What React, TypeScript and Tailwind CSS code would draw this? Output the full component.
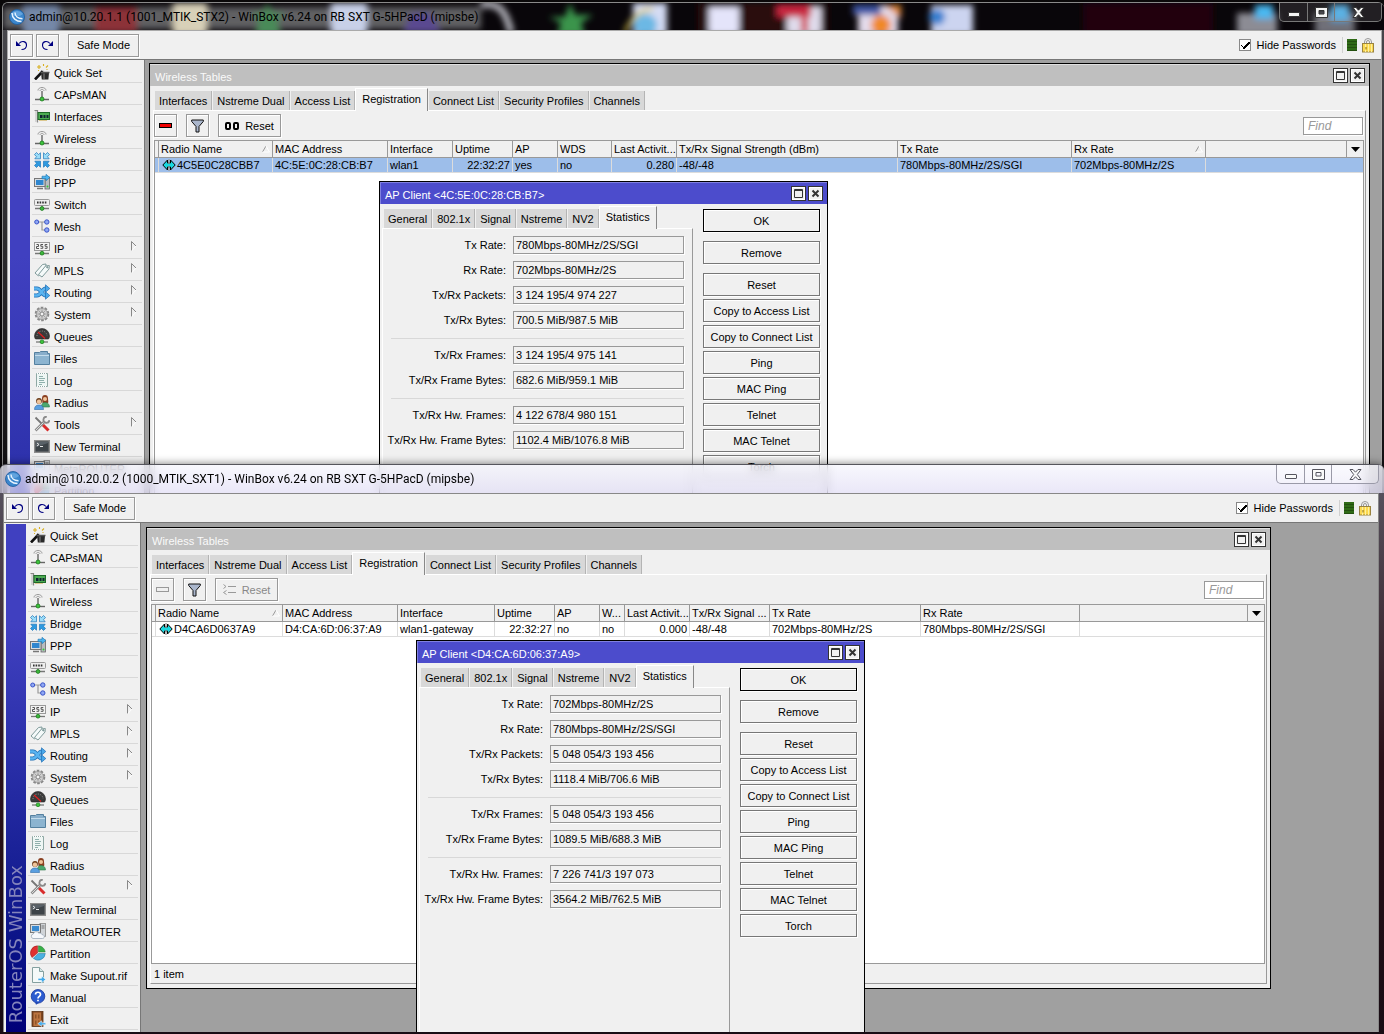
import { useId } from "react";
import type { ReactNode } from "react";

const ICONS: Record<string, ReactNode> = {
  wand: (
    <>
      <path d="M1 15.500L9 7" stroke="#111" strokeWidth="2.600" />
      <path d="M8.500 6L10 7.500" stroke="#ddd" strokeWidth="1.500" />
      <path d="M7 8.500h8l-.6 7H7.800z" fill="#2a2a2a" />
      <path d="M6.500 8.500h9" stroke="#555" strokeWidth="1.500" />
      <path d="M10 9.500v5.500" stroke="#888" />
      <path d="M5 1v4M3 3h4M9.500 0v2M12 3.500l2-2M4 6.500h1M12.500 5.500h1" stroke="#d8b020" strokeWidth="1.100" />
    </>
  ),
  antenna: (
    <>
      <path d="M4 4.500C4 2.500 6 1.500 8 1.500s4 1 4 3M6 5c0-1 1-1.500 2-1.500S10 4 10 5" stroke="#999" fill="none" />
      <path d="M8 5v8" stroke="#777" strokeWidth="1.600" />
      <path d="M1 13.500h14" stroke="#666" strokeWidth="1.400" />
      <circle cx="8" cy="13" r="2" fill="#3cc43c" stroke="#1d7a1d" strokeWidth=".8" />
    </>
  ),
  card: (
    <>
      <path d="M.5 2.500h3v12" stroke="#888" strokeWidth="1.200" fill="none" />
      <path d="M2 3v11" stroke="#ccc" strokeWidth="1.500" />
      <rect x="4" y="4.500" width="11.500" height="7" fill="#4cab52" stroke="#1f6a2a" />
      <rect x="6" y="7" width="2.500" height="3" fill="#123" />
      <rect x="9.500" y="7" width="2" height="3" fill="#123" />
      <rect x="12.500" y="7" width="2" height="3" fill="#123" />
      <path d="M5.500 12.500h8" stroke="#c8a030" strokeDasharray="1 1" />
    </>
  ),
  bridge: (
    <g stroke="#1c74b8" strokeWidth=".7">
      <path d="M.5 2.500l2-2L4.500 2.500 6.500.8v6H.8L2.500 4.700z" fill="#9adcf8" />
      <path d="M15.500 2.500l-2-2-2 2L9.500.8v6h5.700l-1.700-2.100z" fill="#9adcf8" />
      <path d="M.5 13.500l2 2 2-2 2 1.700v-6H.8l1.700 2.100z" fill="#2f9ae0" />
      <path d="M15.500 13.500l-2 2-2-2-2 1.700v-6h5.700l-1.700 2.100z" fill="#2f9ae0" />
    </g>
  ),
  ppp: (
    <>
      <rect x="11" y="3" width="4.500" height="12" fill="#b8bcc0" stroke="#666" strokeWidth=".8" />
      <rect x=".5" y="4.500" width="10.500" height="8" fill="#d8dce0" stroke="#777" />
      <rect x="2" y="6" width="7.500" height="5" fill="#2f86cf" />
      <path d="M3 14.500h6" stroke="#777" strokeWidth="1.500" />
      <path d="M8 2.200h4V.3l3.800 3.200L12 6.700V4.800H8z" fill="#4ab4f0" stroke="#1a70b0" strokeWidth=".6" />
      <circle cx="13.500" cy="12.500" r="1" fill="#3c3" />
    </>
  ),
  switch: (
    <>
      <rect x=".5" y="3.500" width="15" height="6" rx="1" fill="#eee" stroke="#999" />
      <path d="M3 6.500h10" stroke="#333" strokeWidth="2" strokeDasharray="1.600 1" />
      <path d="M8 9.500v3M1 12.500h14" stroke="#777" strokeWidth="1.300" />
      <circle cx="8" cy="12.500" r="1.900" fill="#3cb83c" stroke="#1d7a1d" strokeWidth=".8" />
    </>
  ),
  mesh: (
    <>
      <path d="M4 4h8M8 4v8h4" stroke="#999" fill="none" strokeWidth="1.200" />
      <g fill="#8fa8f4" stroke="#3c55c8">
        <circle cx="2.700" cy="4" r="2" />
        <circle cx="12.800" cy="4" r="2.200" />
        <circle cx="12.800" cy="12" r="2.200" />
      </g>
    </>
  ),
  ip: (
    <>
      <rect x=".5" y="2.500" width="15" height="8" fill="#f4f4f4" stroke="#999" />
      <path d="M2.500 4.500h2v2h-2v2h2.500M9 4.500H6.800v1.800h2v2H6.500M13.300 4.500h-2.200v1.800h2v2h-2.300" stroke="#555" fill="none" />
      <path d="M1 13.500h14" stroke="#777" strokeWidth="1.300" />
      <circle cx="8" cy="13.200" r="1.900" fill="#3cb83c" stroke="#1d7a1d" strokeWidth=".8" />
    </>
  ),
  mpls: (
    <g fill="#f5fafa" stroke="#7f9a9a">
      <path d="M1 11L8.500 2.500 12 2l-.3 3.500L4.500 14z" />
      <path d="M4.500 12.500L11.500 4l3.800-.5L15 7 8 15z" />
      <circle cx="13.300" cy="5.300" r=".7" fill="#7f9a9a" />
    </g>
  ),
  routing: (
    <g fill="none">
      <path d="M0 4.500h3c4 0 5 7 9 7h1M0 11.500h3c4 0 5-7 9-7h1" stroke="#1f6fb4" strokeWidth="4" />
      <path d="M0 4.500h3c4 0 5 7 9 7h1M0 11.500h3c4 0 5-7 9-7h1" stroke="#5ab4f0" strokeWidth="2.600" />
      <path d="M11.500.8l4.300 3.700-4.300 3.700zM11.500 7.800l4.300 3.700-4.300 3.700z" fill="#4aa8ea" stroke="#1f6fb4" strokeWidth=".7" />
    </g>
  ),
  gear: (
    <>
      <circle cx="8" cy="8" r="6.300" fill="none" stroke="#888" strokeWidth="2" strokeDasharray="2.600 1.350" />
      <circle cx="8" cy="8" r="5.500" fill="#cfcfcf" stroke="#909090" strokeWidth=".8" />
      <path d="M8 3.500v9M3.500 8h9M5 5l6 6M11 5l-6 6" stroke="#999" strokeWidth=".8" />
      <circle cx="8" cy="8" r="2" fill="#f3f3f3" stroke="#888" />
    </>
  ),
  gauge: (
    <>
      <path d="M.5 8A7.500 7.500 0 0115.500 8c0 1-.5 2.500-1 3h-13C1 10.500.5 9 .5 8z" fill="#3a3a3a" stroke="#222" strokeWidth=".6" />
      <path d="M3 8a5 5 0 0110 0" stroke="#999" fill="none" strokeDasharray="1 1.500" />
      <path d="M4 4l7 6.500" stroke="#e02020" strokeWidth="1.200" />
      <path d="M2 14h12" stroke="#777" strokeWidth="1.300" />
      <circle cx="8" cy="13.800" r="1.900" fill="#3cc43c" stroke="#1d7a1d" strokeWidth=".7" />
    </>
  ),
  folder: (
    <>
      <path d="M.5 14.500v-12h5l1-1h7v2h2v11z" fill="#88aecb" stroke="#54809f" />
      <path d="M1 5h14v9H1z" fill="#8cb4d0" />
      <path d="M1 5.500h14" stroke="#c3dcec" />
    </>
  ),
  log: (
    <>
      <path d="M2.500 1.500h11v13h-11z" fill="#eef6f4" stroke="#8fa8a4" />
      <path d="M3 1.500h10M3 14.500h10" stroke="#fff" strokeDasharray="1 1" />
      <path d="M5 4.500h4M5 6.500h6M5 8.500h5M5 10.500h6M5 12.500h3" stroke="#8fb0ac" />
    </>
  ),
  people: (
    <>
      <path d="M8 4.500a3 3.400 0 016 0c0 2 .8 4 0 4.500H8.500z" fill="#8a3f20" />
      <circle cx="11" cy="5" r="2" fill="#f0c49a" />
      <path d="M7.500 13c0-3 1-4.500 3.500-4.500s4.500 1.500 4.500 4.500z" fill="#4ca870" stroke="#2b7a4a" strokeWidth=".6" />
      <circle cx="5" cy="7" r="2.900" fill="#6a3a18" />
      <circle cx="5" cy="7.800" r="2.200" fill="#f0c49a" />
      <path d="M.5 15.500c0-3 1.500-4.500 4.500-4.500s4.500 1.500 4.500 4.500z" fill="#5a9fe0" stroke="#2c69a8" strokeWidth=".6" />
    </>
  ),
  tools: (
    <g fill="none">
      <path d="M1.500 1.500L9 9" stroke="#777" strokeWidth="1.800" />
      <path d="M9 9l5.500 5.500" stroke="#d82c2c" strokeWidth="3" />
      <path d="M1.500 14.500L10 6" stroke="#8a8a8a" strokeWidth="2.600" />
      <path d="M1.800 14.200L10 6" stroke="#ddd" strokeWidth="1" />
      <path d="M12.800.8a3 3 0 10 2.600 3.400" stroke="#8a8a8a" strokeWidth="1.800" />
    </g>
  ),
  terminal: (
    <>
      <rect x=".7" y="2.700" width="14.600" height="11.600" fill="#3d4348" stroke="#8c8c8c" strokeWidth="1.400" />
      <path d="M2 9l12-4v-1H2z" fill="#596168" />
      <path d="M3 5l2 1.500L3 8M6 8.500h3" stroke="#e8e8e8" fill="none" />
    </>
  ),
  meta: (
    <>
      <rect x="10" y=".5" width="5.500" height="13" fill="#d0d4d8" stroke="#888" strokeWidth=".8" />
      <path d="M11.500 3h3M11.500 5h3" stroke="#777" />
      <rect x=".5" y="1.500" width="10" height="8" fill="#d8dce0" stroke="#777" />
      <rect x="2" y="3" width="7" height="5" fill="#3a8ad0" />
      <path d="M3 15.500a2.300 2.300 0 01.3-4.500 3 3 0 015.400-1 2.800 2.800 0 013.300 1.600c3 0 3 3.900.5 3.900z" fill="#f6f8fc" stroke="#9aa8b8" strokeWidth=".8" />
    </>
  ),
  pie: (
    <>
      <path d="M7.500 8V.8A7.200 7.200 0 002 12.500z" fill="#e03030" stroke="#8e1a1a" strokeWidth=".5" />
      <path d="M8.500 7V.8a7 7 0 016.700 6.200z" fill="#38b048" stroke="#1d7028" strokeWidth=".5" />
      <path d="M8.300 8.500h7A7.200 7.200 0 013.300 13.300z" fill="#4ab0e0" stroke="#20709c" strokeWidth=".5" />
    </>
  ),
  supout: (
    <>
      <path d="M2.500.5h7l4 4v11h-11z" fill="#f4f9f9" stroke="#84a0a0" />
      <path d="M9.500.5v4h4" fill="#d3e4e4" stroke="#84a0a0" />
      <path d="M8 11.300h3.500V9l4.300 3.500-4.300 3.300v-2.300H8z" fill="#3fa8ea" stroke="#fff" strokeWidth=".6" />
    </>
  ),
  manual: (
    <>
      <circle cx="8" cy="7.300" r="6.800" fill="#2c5cd0" stroke="#17359a" strokeWidth=".8" />
      <path d="M5 13l1 2.700L9.500 13.500z" fill="#2148b4" />
      <path d="M5.500 5.500c0-3 5-3 5 0 0 2-2.500 1.800-2.500 4M8 10.800v1.500" stroke="#fff" strokeWidth="1.700" fill="none" />
    </>
  ),
  exit: (
    <>
      <rect x="2" y=".5" width="11" height="15" fill="#7c4520" stroke="#5b3012" strokeWidth=".8" />
      <rect x="3.500" y="1.500" width="7.500" height="13.500" fill="#bb7440" />
      <path d="M5 3.500h1.500v4H5zM8 3.500h1.500v4H8zM5 9.500h1.500v4H5zM8 9.500h1.500v2H8z" fill="#8f5428" />
      <path d="M15.800 11.700h-4V9.800L7.800 12.700l4 2.900v-1.800h4z" fill="#4ab0f0" stroke="#fff" strokeWidth=".5" />
    </>
  ),
};

function Icon({ name }: { name: string }) {
  return (
    <svg width="16" height="16" viewBox="0 0 16 16" className="shrink-0" aria-hidden="true">
      {ICONS[name]}
    </svg>
  );
}

const MENU: { icon: string; label: string; sub?: boolean }[] = [
  { icon: "wand", label: "Quick Set" },
  { icon: "antenna", label: "CAPsMAN" },
  { icon: "card", label: "Interfaces" },
  { icon: "antenna", label: "Wireless" },
  { icon: "bridge", label: "Bridge" },
  { icon: "ppp", label: "PPP" },
  { icon: "switch", label: "Switch" },
  { icon: "mesh", label: "Mesh" },
  { icon: "ip", label: "IP", sub: true },
  { icon: "mpls", label: "MPLS", sub: true },
  { icon: "routing", label: "Routing", sub: true },
  { icon: "gear", label: "System", sub: true },
  { icon: "gauge", label: "Queues" },
  { icon: "folder", label: "Files" },
  { icon: "log", label: "Log" },
  { icon: "people", label: "Radius" },
  { icon: "tools", label: "Tools", sub: true },
  { icon: "terminal", label: "New Terminal" },
  { icon: "meta", label: "MetaROUTER" },
  { icon: "pie", label: "Partition" },
  { icon: "supout", label: "Make Supout.rif" },
  { icon: "manual", label: "Manual" },
  { icon: "exit", label: "Exit" },
];

function Logo() {
  return (
    <svg width="16" height="16" viewBox="0 0 16 16" className="shrink-0" aria-hidden="true">
      <circle cx="8" cy="8" r="7.500" fill="#3b86cc" stroke="#1d5a9c" strokeWidth=".8" />
      <path d="M2 5a7 6 0 0112 0 9 9 0 01-12 0z" fill="#7db8ea" opacity=".6" />
      <path d="M3 4c0 5 4 8.500 9.500 8.500M6 3.500c0 3.500 3 6 7.500 6.300" stroke="#e8f4ff" strokeWidth="1.400" fill="none" />
    </svg>
  );
}

function Sidebar() {
  return (
    <aside className="flex w-[137px] shrink-0 overflow-hidden border-r border-[#777] bg-[#f0f0f0] pl-[2px] pt-[1px]">
      <div className="flex w-[20px] shrink-0 items-end justify-center bg-linear-to-b from-[#4040c0] from-20% to-[#000078] pb-[9px]">
        <span className="rotate-180 whitespace-nowrap font-['DejaVu_Sans'] text-[18px] leading-[20px] text-[#8484bc] [writing-mode:vertical-rl]">
          RouterOS WinBox
        </span>
      </div>
      <nav className="ml-[2px] w-[110px]">
        {MENU.map((m) => (
          <button key={m.label} type="button" className="flex h-[22px] w-full items-center gap-1 border-b border-[#d8d8d8] pl-[2px] text-left">
            <Icon name={m.icon} />
            <span className="flex-1 whitespace-nowrap pt-[2px]">{m.label}</span>
            {m.sub && (
              <svg width="10" height="12" viewBox="0 0 10 12" className="mr-[2px] mb-1 shrink-0" aria-hidden="true">
                <path d="M1.500 11V1.500L6 6" stroke="#888" fill="none" />
                <path d="M6 6l-4.500 5" stroke="#fff" fill="none" />
              </svg>
            )}
          </button>
        ))}
      </nav>
    </aside>
  );
}

function ToolButton({ children, className = "", label, disabled }: { children: ReactNode; className?: string; label?: string; disabled?: boolean }) {
  return (
    <button
      type="button"
      aria-label={label}
      disabled={disabled}
      className={`flex h-[23px] items-center justify-center border border-[#999] bg-[#f0f0f0] shadow-[inset_1px_1px_0_#fff,1px_1px_0_#fff] ${className}`}
    >
      {children}
    </button>
  );
}

function Toolbar() {
  return (
    <div className="flex h-[29px] shrink-0 items-center border-b border-[#777] bg-[#f0f0f0] pr-[7px] pl-[2px]">
      <ToolButton className="w-[23px]" label="Undo">
        <svg width="13" height="12" viewBox="0 0 13 12" aria-hidden="true">
          <path d="M1 2v5h5z" fill="#000080" />
          <path d="M4 4.500C7 1 11.500 2.500 11.500 6S9 10.500 6.500 10.500" stroke="#000080" strokeWidth="1.100" fill="none" />
        </svg>
      </ToolButton>
      <ToolButton className="ml-[3px] w-[23px]" label="Redo">
        <svg width="13" height="12" viewBox="0 0 13 12" aria-hidden="true">
          <path d="M12 2v5H7z" fill="#000080" />
          <path d="M9 4.500C6 1 1.500 2.500 1.500 6S4 10.500 6.500 10.500" stroke="#000080" strokeWidth="1.100" fill="none" />
        </svg>
      </ToolButton>
      <ToolButton className="ml-[9px] w-[71px]">Safe Mode</ToolButton>
      <label className="ml-auto flex items-center gap-[6px]">
        <input
          type="checkbox"
          defaultChecked
          className="size-[12px] appearance-none border border-[#888] bg-white bg-[image:linear-gradient(45deg,transparent_34%,#000_34%,#000_48%,transparent_48%),linear-gradient(-45deg,transparent_42%,#000_42%,#000_58%,transparent_58%)] bg-[length:4px_4px,7px_7px] bg-[position:1px_4px,3px_2px] bg-no-repeat"
        />
        Hide Passwords
      </label>
      <div className="ml-[6px] h-[16px] w-[1px] bg-[#d0d0d0]" />
      <div className="ml-[4px] h-[12px] w-[10px] bg-[repeating-linear-gradient(#2f6a16_0_2px,#23500f_2px_3px)]" />
      <svg width="12" height="15" viewBox="0 0 12 15" className="ml-[5px]" aria-hidden="true">
        <path d="M2.500 6V4a3.500 3.500 0 017 0v2M4.500 6V4a1.500 1.500 0 013 0v2" stroke="#999" fill="none" />
        <rect x=".5" y="5.500" width="11" height="8.500" fill="#fbd850" stroke="#9a8340" />
        <path d="M3.500 6v8M6.500 6v8M9.500 6v8" stroke="#fdf0a0" />
        <path d="M4 9v2.500" stroke="#8a6a10" />
      </svg>
    </div>
  );
}

function FrameButtons() {
  return (
    <div className="ml-auto flex gap-[2px] pr-[4px]">
      <button type="button" aria-label="Maximize" className="flex size-[15px] items-center justify-center border border-[#333] bg-[#f0f0f0] shadow-[inset_0_0_0_1px_#fff]">
        <svg width="9" height="9" viewBox="0 0 9 9" aria-hidden="true">
          <path d="M.5.500h8v8h-8zM.5 1.500h8" stroke="#333" fill="none" />
        </svg>
      </button>
      <button type="button" aria-label="Close" className="flex size-[15px] items-center justify-center border border-[#333] bg-[#f0f0f0] shadow-[inset_0_0_0_1px_#fff]">
        <svg width="9" height="9" viewBox="0 0 9 9" aria-hidden="true">
          <path d="M1.500 1.500l6 6M7.500 1.500l-6 6" stroke="#333" strokeWidth="2" />
        </svg>
      </button>
    </div>
  );
}

function Tabs({ items, active }: { items: string[]; active: string }) {
  return (
    <div role="tablist" className="flex h-[22px] shrink-0 items-end gap-[1px] pl-[2px]">
      {items.map((t) =>
        t === active ? (
          <button
            key={t}
            role="tab"
            aria-selected="true"
            type="button"
            className="relative -mb-[1px] -ml-[1px] h-[23px] whitespace-nowrap border-t border-r border-l border-t-white border-r-[#888] border-l-white bg-[#f0f0f0] px-[6px] pb-[2px]"
          >
            {t}
          </button>
        ) : (
          <button
            key={t}
            role="tab"
            aria-selected="false"
            type="button"
            className="h-[19px] whitespace-nowrap border-r border-[#b4b4b4] bg-[#d8d8d8] px-[4px]"
          >
            {t}
          </button>
        ),
      )}
    </div>
  );
}

type Column = { label: string; width: string; value: string; right?: boolean; sort?: boolean };

function Sort() {
  return (
    <svg width="8" height="8" viewBox="0 0 8 8" className="mr-[2px] shrink-0" aria-hidden="true">
      <path d="M.5 7L4 1" stroke="#999" />
      <path d="M4 1l3.500 6H.5" stroke="#fff" fill="none" />
    </svg>
  );
}

function DataTable({ columns, selected }: { columns: Column[]; selected: boolean }) {
  return (
    <table className="w-full table-fixed border-separate border-spacing-0 text-left">
      <colgroup>
        <col className="w-[4px]" />
        {columns.map((c) => (
          <col key={c.label} className={c.width} />
        ))}
        <col />
        <col className="w-[16px]" />
      </colgroup>
      <thead>
        <tr className="h-[17px] bg-[#f0f0f0]">
          <th className="border-r border-b border-[#999] p-0" />
          {columns.map((c) => (
            <th key={c.label} className="h-[17px] overflow-hidden border-r border-b border-[#999] p-0 font-normal">
              <div className="flex items-center justify-between whitespace-nowrap pl-[2px] leading-[16px]">
                {c.label}
                {c.sort && <Sort />}
              </div>
            </th>
          ))}
          <th className="border-r border-b border-[#999] p-0" />
          <th className="border-b border-[#999] p-0">
            <svg width="9" height="5" viewBox="0 0 9 5" className="mx-auto" aria-hidden="true">
              <path d="M0 0h9L4.500 5z" fill="#000" />
            </svg>
          </th>
        </tr>
      </thead>
      <tbody>
        <tr className={selected ? "bg-[#9dbeea]" : "bg-white"}>
          <td className="border-r border-b border-[#dcdcdc] p-0" />
          {columns.map((c, i) => (
            <td key={c.label} className={`h-[15px] overflow-hidden border-r border-b border-[#dcdcdc] p-0 ${c.right ? "text-right" : ""}`}>
              <div className={`flex items-center whitespace-nowrap px-[2px] leading-[14px] ${c.right ? "justify-end" : ""}`}>
                {i === 0 && (
                  <svg width="14" height="12" viewBox="0 0 14 12" className="ml-[1px] mr-[1px] shrink-0" aria-hidden="true">
                    <path d="M5.500 1L.8 6l4.700 5V8h3v3l4.700-5-4.700-5v3h-3z" fill="#18d8e0" stroke="#000" />
                    <path d="M7 0v12" stroke="#fff" />
                    <path d="M7 .5v11" stroke="#000" strokeDasharray="1 1" />
                    <path d="M4 6h6" stroke="#18d8e0" strokeWidth="2" />
                  </svg>
                )}
                {c.value}
              </div>
            </td>
          ))}
          <td className="border-b border-[#dcdcdc] p-0" />
          <td className="border-b border-[#dcdcdc] p-0" />
        </tr>
      </tbody>
    </table>
  );
}

const WIRELESS_TABS = ["Interfaces", "Nstreme Dual", "Access List", "Registration", "Connect List", "Security Profiles", "Channels"];

function WirelessTables({ place, columns, selected }: { place: string; columns: Column[]; selected: boolean }) {
  return (
    <section className={`absolute flex flex-col border border-black bg-[#f0f0f0] shadow-[inset_1px_1px_0_#e8e8e8] ${place}`}>
      <header className="flex h-[22px] shrink-0 items-center border-t border-[#e0e0e0] bg-[#bfbfbf] pl-[5px] text-[#fafafa]">
        <h2 className="pt-[2px]">Wireless Tables</h2>
        <FrameButtons />
      </header>
      <div className="flex min-h-0 flex-1 flex-col px-[3px] pt-[2px] pb-[4px]">
        <Tabs items={WIRELESS_TABS} active="Registration" />
        <div className="flex min-h-0 flex-1 flex-col border border-t-white border-r-[#999] border-b-[#999] border-l-white pr-[1px]">
          <div className="flex h-[29px] shrink-0 items-center">
            <ToolButton className="w-[23px]" label="Remove" disabled={!selected}>
              <svg width="13" height="5" viewBox="0 0 13 5" aria-hidden="true">
                <rect x=".5" y=".5" width="12" height="4" fill={selected ? "#f00000" : "#f0f0f0"} stroke={selected ? "#000" : "#999"} />
              </svg>
            </ToolButton>
            <ToolButton className="ml-[9px] w-[23px]" label="Filter">
              <svg width="13" height="14" viewBox="0 0 13 14" aria-hidden="true">
                <path d="M.7 1h11.600v1.500L8 7.500V13H5V7.500L.7 2.500z" fill="#aab6cc" stroke="#111" />
              </svg>
            </ToolButton>
            <ToolButton className="ml-[9px] w-[63px] gap-[6px]" disabled={!selected}>
              {selected ? (
                <>
                  <svg width="14" height="8" viewBox="0 0 14 8" aria-hidden="true">
                    <rect x="1" y="1" width="4" height="6" rx="1" stroke="#000" strokeWidth="2" fill="none" />
                    <rect x="9" y="1" width="4" height="6" rx="1" stroke="#000" strokeWidth="2" fill="none" />
                  </svg>
                  <span>Reset</span>
                </>
              ) : (
                <>
                  <svg width="13" height="11" viewBox="0 0 13 11" aria-hidden="true">
                    <path d="M5 2.500h8M5 8.500h8" stroke="#999" />
                    <path d="M.5.500L3 2.500.5 4.500M3.500 6.500l-3 2 3 2" stroke="#999" fill="none" />
                  </svg>
                  <span className="text-[#888]">Reset</span>
                </>
              )}
            </ToolButton>
            <input
              type="search"
              aria-label="Find"
              placeholder="Find"
              className="mr-[1px] ml-auto h-[18px] w-[60px] border border-[#999] bg-white px-[4px] text-[12px] italic shadow-[1px_1px_0_#fff] placeholder:text-[#999]"
            />
          </div>
          <div className="flex min-h-0 flex-1 flex-col border-t border-r border-l border-[#999] bg-white">
            <DataTable columns={columns} selected={selected} />
          </div>
          <footer className="flex h-[20px] shrink-0 items-center border-t border-[#999] pl-[3px]">1 item</footer>
        </div>
      </div>
    </section>
  );
}

const ACTIONS = ["OK", "Remove", "Reset", "Copy to Access List", "Copy to Connect List", "Ping", "MAC Ping", "Telnet", "MAC Telnet", "Torch"];

type Field = [label: string, value: string];

function ClientDialog({ place, mac, groups }: { place: string; mac: string; groups: Field[][] }) {
  const id = useId();
  return (
    <section role="dialog" aria-label={`AP Client ${mac}`} className={`absolute flex w-[449px] flex-col border border-b-0 border-black bg-[#f0f0f0] ${place}`}>
      <header className="flex h-[22px] shrink-0 items-center border-t border-l border-[#8080e0] bg-[#4c4ccc] pl-[4px] text-white">
        <h2 className="pt-[3px]">{`AP Client <${mac}>`}</h2>
        <FrameButtons />
      </header>
      <div className="flex min-h-0 flex-1 justify-between pt-[2px] pr-[7px] pl-[2px]">
        <div className="flex w-[311px] flex-col">
          <Tabs items={["General", "802.1x", "Signal", "Nstreme", "NV2", "Statistics"]} active="Statistics" />
          <div className="flex-1 border-t border-r border-l border-t-white border-r-[#999] border-l-white pt-[7px] pr-[8px] pl-[8px]">
            {groups.map((g, i) => (
              <div key={i} className={`flex flex-col gap-[7px] ${i > 0 ? "mt-[9px] border-t border-[#d8d8d8] pt-[7px]" : ""}`}>
                {g.map(([label, value]) => (
                  <div key={label} className="flex h-[18px] items-center justify-end gap-[7px]">
                    <label htmlFor={`${id}${label}`} className="shrink-0 whitespace-nowrap">
                      {label}:
                    </label>
                    <input
                      id={`${id}${label}`}
                      readOnly
                      value={value}
                      className="h-[18px] w-[171px] shrink-0 border border-[#999] bg-[#f0f0f0] px-[2px] shadow-[1px_1px_0_#fff]"
                    />
                  </div>
                ))}
              </div>
            ))}
          </div>
        </div>
        <div className="flex w-[117px] flex-col gap-[3px] pt-[3px]">
          {ACTIONS.map((a, i) => (
            <button
              key={a}
              type="button"
              className={`h-[23px] shrink-0 whitespace-nowrap border bg-[#f0f0f0] shadow-[inset_1px_1px_0_#fff,1px_1px_0_#fff] ${i === 0 ? "border-black" : "border-[#777]"} ${i < 2 ? "mb-[6px]" : ""}`}
            >
              {a}
            </button>
          ))}
        </div>
      </div>
    </section>
  );
}

function CaptionButtons({ dark }: { dark: boolean }) {
  const line = dark ? "border-[#777]" : "border-[#9a9aa8]";
  const ink = dark ? "#f4f4f4" : "#fafafa";
  const edge = dark ? "#333" : "#55555f";
  return (
    <div className={`ml-auto flex h-[19px] shrink-0 self-start overflow-hidden rounded-b-[5px] border border-t-0 ${line} ${dark ? "bg-white/10" : "bg-white/30"}`}>
      <button type="button" aria-label="Minimize" className={`flex w-[28px] items-center justify-center border-r pt-[4px] ${line}`}>
        <svg width="12" height="5" viewBox="0 0 12 5" aria-hidden="true">
          <rect x=".5" y=".5" width="11" height="4" rx=".5" fill={ink} stroke={edge} />
        </svg>
      </button>
      <button type="button" aria-label="Maximize" className={`flex w-[27px] items-center justify-center border-r ${line}`}>
        <svg width="13" height="11" viewBox="0 0 13 11" aria-hidden="true">
          <path d="M.5.500h12v10H.5zM4 3.500v3.500h5V3.500z" fillRule="evenodd" fill={ink} stroke={edge} />
        </svg>
      </button>
      <button type="button" aria-label="Close" className="flex w-[46px] items-center justify-center">
        <svg width="13" height="11" viewBox="0 0 13 11" aria-hidden="true">
          <path d="M1 .5h3l2.500 2.700L9 .5h3L8.300 5.500l3.700 5H9L6.500 7.700 4 10.500H1l3.700-5z" fill={ink} stroke={edge} />
        </svg>
      </button>
    </div>
  );
}

function WallpaperStrip() {
  return (
    <svg className="absolute inset-0 h-full w-full" aria-hidden="true">
      <defs>
        <filter id="soft" x="-20%" y="-50%" width="140%" height="200%">
          <feGaussianBlur stdDeviation="3" />
        </filter>
      </defs>
      <rect width="100%" height="100%" fill="#09060a" />
      <g filter="url(#soft)">
        <rect x="0" y="4" width="478" height="22" fill="#606064" />
        <rect x="20" y="2" width="36" height="30" fill="#7488a8" />
        <rect x="92" y="4" width="42" height="26" fill="#8c3038" />
        <rect x="170" y="0" width="34" height="32" fill="#d8d0b8" />
        <path d="M264 0l6 10h12l-8 8 4 14h-26l4-14-8-8h12z" fill="#4a8a58" />
        <rect x="328" y="0" width="36" height="32" fill="#c8d0e8" />
        <path d="M400 30l8-20h20l10 20z" fill="#5a4a90" />
        <path d="M478 2c20-4 26 10 30 28" stroke="#b0b0b8" strokeWidth="7" fill="none" />
        <path d="M567 0l5 12h18l-12 8 4 12h-28l4-12-12-6h16z" fill="#3a944c" />
        <rect x="630" y="0" width="34" height="32" fill="#d4dcf4" />
        <ellipse cx="642" cy="22" rx="12" ry="11" fill="#6cb8e4" />
        <path d="M622 30c8-20 20-24 28-24" stroke="#e0c840" strokeWidth="3" fill="none" />
        <rect x="695" y="0" width="130" height="30" fill="#2c0810" />
        <rect x="706" y="4" width="30" height="28" fill="#e4e4fa" />
        <rect x="784" y="4" width="34" height="28" fill="#e0dcec" />
        <rect x="774" y="2" width="34" height="12" fill="#c82840" />
        <rect x="798" y="12" width="7" height="18" fill="#d04858" />
        <rect x="855" y="2" width="40" height="30" fill="#e4dcec" />
        <rect x="850" y="2" width="28" height="10" fill="#4058a8" />
        <circle cx="878" cy="22" r="10" fill="#f08828" />
        <path d="M882 2l16 14V2z" fill="#e08830" />
        <rect x="928" y="2" width="42" height="30" fill="#ccd4f0" />
        <circle cx="934" cy="14" r="8" fill="#3880d0" />
        <rect x="1080" y="0" width="130" height="32" fill="#24040c" />
        <rect x="1234" y="10" width="40" height="22" fill="#8c8c94" />
        <rect x="1252" y="2" width="18" height="14" fill="#48b8f0" />
        <rect x="1312" y="10" width="40" height="22" fill="#707078" />
        <rect x="1328" y="2" width="18" height="16" fill="#48a8e0" />
      </g>
    </svg>
  );
}

const UPPER_COLUMNS: Column[] = [
  { label: "Radio Name", width: "w-[114px]", value: "4C5E0C28CBB7", sort: true },
  { label: "MAC Address", width: "w-[115px]", value: "4C:5E:0C:28:CB:B7" },
  { label: "Interface", width: "w-[65px]", value: "wlan1" },
  { label: "Uptime", width: "w-[60px]", value: "22:32:27", right: true },
  { label: "AP", width: "w-[45px]", value: "yes" },
  { label: "WDS", width: "w-[54px]", value: "no" },
  { label: "Last Activit...", width: "w-[65px]", value: "0.280", right: true },
  { label: "Tx/Rx Signal Strength (dBm)", width: "w-[221px]", value: "-48/-48" },
  { label: "Tx Rate", width: "w-[174px]", value: "780Mbps-80MHz/2S/SGI" },
  { label: "Rx Rate", width: "w-[134px]", value: "702Mbps-80MHz/2S", sort: true },
];

const LOWER_COLUMNS: Column[] = [
  { label: "Radio Name", width: "w-[127px]", value: "D4CA6D0637A9", sort: true },
  { label: "MAC Address", width: "w-[115px]", value: "D4:CA:6D:06:37:A9" },
  { label: "Interface", width: "w-[97px]", value: "wlan1-gateway" },
  { label: "Uptime", width: "w-[60px]", value: "22:32:27", right: true },
  { label: "AP", width: "w-[45px]", value: "no" },
  { label: "W...", width: "w-[25px]", value: "no" },
  { label: "Last Activit...", width: "w-[65px]", value: "0.000", right: true },
  { label: "Tx/Rx Signal ...", width: "w-[80px]", value: "-48/-48" },
  { label: "Tx Rate", width: "w-[151px]", value: "702Mbps-80MHz/2S" },
  { label: "Rx Rate", width: "w-[159px]", value: "780Mbps-80MHz/2S/SGI" },
];

const UPPER_STATS: Field[][] = [
  [
    ["Tx Rate", "780Mbps-80MHz/2S/SGI"],
    ["Rx Rate", "702Mbps-80MHz/2S"],
    ["Tx/Rx Packets", "3 124 195/4 974 227"],
    ["Tx/Rx Bytes", "700.5 MiB/987.5 MiB"],
  ],
  [
    ["Tx/Rx Frames", "3 124 195/4 975 141"],
    ["Tx/Rx Frame Bytes", "682.6 MiB/959.1 MiB"],
  ],
  [
    ["Tx/Rx Hw. Frames", "4 122 678/4 980 151"],
    ["Tx/Rx Hw. Frame Bytes", "1102.4 MiB/1076.8 MiB"],
  ],
];

const LOWER_STATS: Field[][] = [
  [
    ["Tx Rate", "702Mbps-80MHz/2S"],
    ["Rx Rate", "780Mbps-80MHz/2S/SGI"],
    ["Tx/Rx Packets", "5 048 054/3 193 456"],
    ["Tx/Rx Bytes", "1118.4 MiB/706.6 MiB"],
  ],
  [
    ["Tx/Rx Frames", "5 048 054/3 193 456"],
    ["Tx/Rx Frame Bytes", "1089.5 MiB/688.3 MiB"],
  ],
  [
    ["Tx/Rx Hw. Frames", "7 226 741/3 197 073"],
    ["Tx/Rx Hw. Frame Bytes", "3564.2 MiB/762.5 MiB"],
  ],
];

export default function App() {
  return (
    <main className="relative h-screen overflow-hidden bg-[#0a0809] font-['Liberation_Sans',sans-serif] text-[11px] leading-[14px] text-black">
      <div className="absolute top-[2px] right-0 bottom-0 left-[2px] flex flex-col overflow-hidden rounded-t-[6px] border-t border-l border-[#8a8a8a] bg-linear-to-b from-[#4a4a4e] via-[#0c0a0c] to-[#0c0a0c]">
        <header className="relative flex h-[27px] shrink-0 pr-[2px] pl-[6px]">
          <WallpaperStrip />
          <div className="relative flex flex-1 items-center gap-[4px]">
            <Logo />
            <h1 className="whitespace-nowrap font-['Roboto',sans-serif] text-[12px]">
              admin@10.20.1.1 (1001_MTIK_STX2) - WinBox v6.24 on RB SXT G-5HPacD (mipsbe)
            </h1>
            <CaptionButtons dark />
          </div>
        </header>
        <div className="mr-[2px] ml-[4px] flex min-h-0 flex-1 flex-col border-t border-r border-l border-[#aaa] bg-[#a0a0a0]">
          <Toolbar />
          <div className="flex min-h-0 flex-1">
            <Sidebar />
            <div className="relative flex-1 overflow-hidden">
              <WirelessTables place="top-[3px] right-[11px] bottom-[44px] left-[4px]" columns={UPPER_COLUMNS} selected />
              <ClientDialog place="top-[121px] bottom-0 left-[234px]" mac="4C:5E:0C:28:CB:B7" groups={UPPER_STATS} />
            </div>
          </div>
        </div>
      </div>

      <div className="absolute inset-x-0 top-[464px] bottom-0 flex flex-col overflow-hidden rounded-t-[6px] border-t border-[#55555c] shadow-[0_0_8px_#0008]">
        <header className="flex h-[28px] shrink-0 items-center gap-[4px] bg-linear-to-b from-[#f4f4fc]/70 to-[#e0dcf4]/70 pr-[5px] pl-[5px] backdrop-blur-[4px]">
          <Logo />
          <h1 className="whitespace-nowrap font-['Roboto',sans-serif] text-[12px]">
            admin@10.20.0.2 (1000_MTIK_SXT1) - WinBox v6.24 on RB SXT G-5HPacD (mipsbe)
          </h1>
          <CaptionButtons dark={false} />
        </header>
        <div className="flex min-h-0 flex-1 bg-linear-to-b from-[#55505c] via-[#2a1018] to-[#180c14] pr-[5px] pb-[2px] pl-[3px]">
          <div className="flex min-w-0 flex-1 flex-col border-t border-r border-l border-[#888] bg-[#a0a0a0]">
            <Toolbar />
            <div className="flex min-h-0 flex-1">
              <Sidebar />
              <div className="relative flex-1 overflow-hidden">
                <WirelessTables place="top-[4px] right-[107px] bottom-[43px] left-[5px]" columns={LOWER_COLUMNS} selected={false} />
                <ClientDialog place="top-[117px] bottom-0 left-[275px]" mac="D4:CA:6D:06:37:A9" groups={LOWER_STATS} />
              </div>
            </div>
          </div>
        </div>
      </div>
    </main>
  );
}
